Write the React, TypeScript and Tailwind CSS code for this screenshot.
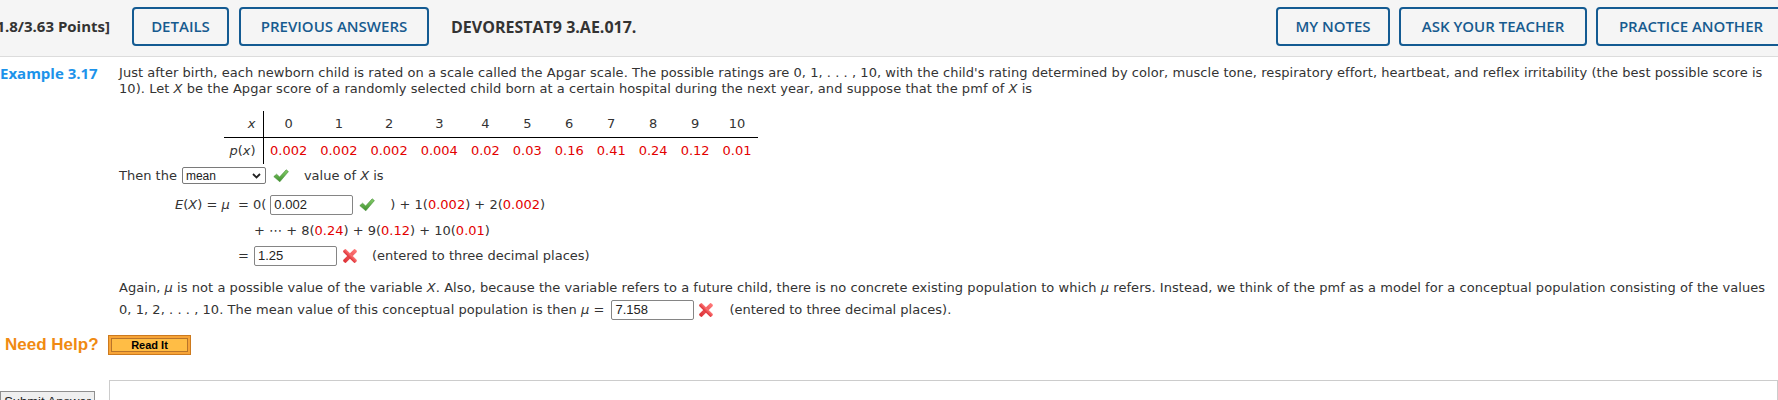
import React from "react";

function Check() {
  return (
    <svg width="16" height="14" viewBox="0 0 16 14" className="shrink-0">
      <defs>
        <linearGradient id="ck" x1="0" y1="0" x2="0" y2="1">
          <stop offset="0" stopColor="#86cf6a" />
          <stop offset="1" stopColor="#3d8f2c" />
        </linearGradient>
      </defs>
      <path d="M0.8 7.6 L3.6 5.2 L6.6 8 L13.2 0.8 L15.4 2.6 L6.8 12.8 Z" fill="url(#ck)" stroke="#3f8a30" strokeWidth="0.6" strokeLinejoin="round" />
    </svg>
  );
}

function Cross() {
  return (
    <svg width="14" height="14" viewBox="0 0 14 14" className="shrink-0">
      <defs>
        <linearGradient id="cx" x1="0" y1="0" x2="0" y2="1">
          <stop offset="0" stopColor="#ff7a7a" />
          <stop offset="1" stopColor="#dc2f35" />
        </linearGradient>
      </defs>
      <g transform="rotate(45 7 7)" fill="url(#cx)">
        <rect x="5" y="-1.5" width="4" height="17" rx="1.5" />
        <rect x="-1.5" y="5" width="17" height="4" rx="1.5" />
      </g>
    </svg>
  );
}

function Field({ value }: { value: string }) {
  return (
    <div className="w-[83px] h-[20px] border border-[#858585] rounded-[2px] bg-white pl-[3px] flex items-center font-['Liberation_Sans',Arial,sans-serif] text-[13px] text-[#222] shrink-0">
      {value}
    </div>
  );
}

function R({ children }: { children: React.ReactNode }) {
  return <span className="text-[#e30000]">{children}</span>;
}

const xs = ["0", "1", "2", "3", "4", "5", "6", "7", "8", "9", "10"];
const ps = ["0.002", "0.002", "0.002", "0.004", "0.02", "0.03", "0.16", "0.41", "0.24", "0.12", "0.01"];

export default function App() {
  const btn =
    "h-[39px] flex items-center justify-center border-2 border-[#145b92] rounded-[4px] text-[15px] font-semibold text-[#175b8f] shrink-0";
  return (
    <div className="w-[1778px] h-[400px] overflow-hidden bg-white text-[#333] font-[Verdana,'DejaVu_Sans',sans-serif] text-[13px]">
      {/* header bar */}
      <div className="h-[57px] bg-[#f5f5f5] border-b border-[#dcdcdc] flex items-start pt-[7px] font-['Open_Sans',sans-serif]">
        <div className="w-[110px] h-[39px] flex items-center justify-end overflow-hidden shrink-0">
          <span className="whitespace-nowrap font-bold text-[15px] text-[#333]">[1.8/3.63 Points]</span>
        </div>
        <div className={btn + " w-[97px] ml-[22px]"}>DETAILS</div>
        <div className={btn + " w-[190px] ml-[10px]"}>PREVIOUS ANSWERS</div>
        <div className="h-[39px] flex items-center ml-[22px] font-bold text-[16px] text-[#333] whitespace-nowrap">
          DEVORESTAT9 3.AE.017.
        </div>
        <div className="ml-auto mr-[-8px] flex gap-[9px]">
          <div className={btn + " w-[114px]"}>MY NOTES</div>
          <div className={btn + " w-[188px]"}>ASK YOUR TEACHER</div>
          <div className={btn + " w-[190px]"}>PRACTICE ANOTHER</div>
        </div>
      </div>

      {/* question */}
      <div className="flex mt-[8px]">
        <div className="w-[119px] shrink-0 font-['Open_Sans',sans-serif] font-bold text-[15px] text-[#1c93ea] leading-[16px]">
          Example 3.17
        </div>
        <div className="flex-1 leading-[16px] whitespace-nowrap">
          <div className="tracking-[0.05px]">
            Just after birth, each newborn child is rated on a scale called the Apgar scale. The possible ratings are 0, 1, . . . , 10, with the child's rating determined by color, muscle tone, respiratory effort, heartbeat, and reflex irritability (the best possible score is
          </div>
          <div className="tracking-[0.05px]">
            10). Let <i>X</i> be the Apgar score of a randomly selected child born at a certain hospital during the next year, and suppose that the pmf of <i>X</i> is
          </div>

          <table className="border-collapse ml-[105px] mt-[14px]">
            <tbody>
              <tr className="h-[26px] border-b border-black">
                <td className="w-[39px] pr-[7px] text-right border-r border-black italic">x</td>
                {xs.map((v, i) => (
                  <td key={i} className="px-[6.5px] text-center">{v}</td>
                ))}
              </tr>
              <tr className="h-[27px]">
                <td className="w-[39px] pr-[7px] text-right border-r border-black">
                  <i>p</i>(<i>x</i>)
                </td>
                {ps.map((v, i) => (
                  <td key={i} className="px-[6.5px] text-center text-[#e30000]">{v}</td>
                ))}
              </tr>
            </tbody>
          </table>

          <div className="flex items-center h-[17px] mt-[3px]">
            <span>Then the</span>
            <div className="ml-[5px] w-[84px] h-[17px] border border-[#7a7a7a] rounded-[2px] bg-white flex items-center justify-between pl-[3px] pr-[4px] font-['Liberation_Sans',Arial,sans-serif] text-[12px] text-[#222]">
              <span>mean</span>
              <svg width="9" height="6" viewBox="0 0 9 6">
                <polyline points="1,1 4.5,4.5 8,1" fill="none" stroke="#222" strokeWidth="1.8" />
              </svg>
            </div>
            <div className="ml-[7px]"><Check /></div>
            <span className="ml-[15px]">value of <i>X</i> is</span>
          </div>

          <div className="flex items-center h-[20px] mt-[11px] ml-[56px]">
            <span>
              <i>E</i>(<i>X</i>) = <i>μ</i>&nbsp; = 0(
            </span>
            <div className="ml-[4px]"><Field value="0.002" /></div>
            <div className="ml-[6px]"><Check /></div>
            <span className="ml-[15px]">
              ) + 1(<R>0.002</R>) + 2(<R>0.002</R>)
            </span>
          </div>

          <div className="mt-[8px] ml-[135px]">
            + ⋯ + 8(<R>0.24</R>) + 9(<R>0.12</R>) + 10(<R>0.01</R>)
          </div>

          <div className="flex items-center h-[20px] mt-[7px] ml-[119px]">
            <span>=</span>
            <div className="ml-[5px]"><Field value="1.25" /></div>
            <div className="ml-[6px]"><Cross /></div>
            <span className="ml-[15px]">(entered to three decimal places)</span>
          </div>

          <div className="mt-[14px] tracking-[0.05px]">
            Again, <i>μ</i> is not a possible value of the variable <i>X</i>. Also, because the variable refers to a future child, there is no concrete existing population to which <i>μ</i> refers. Instead, we think of the pmf as a model for a conceptual population consisting of the values
          </div>
          <div className="flex items-center h-[20px] mt-[4px]">
            <span className="tracking-[0.05px]">
              0, 1, 2, . . . , 10. The mean value of this conceptual population is then <i>μ</i> =
            </span>
            <div className="ml-[7px]"><Field value="7.158" /></div>
            <div className="ml-[5px]"><Cross /></div>
            <span className="ml-[16px]">(entered to three decimal places).</span>
          </div>
        </div>
      </div>

      {/* help */}
      <div className="flex items-center mt-[15px] h-[20px]">
        <div className="w-[108px] pl-[5px] font-['Liberation_Sans',Arial,sans-serif] font-bold text-[17px] text-[#f08a12] whitespace-nowrap">
          Need Help?
        </div>
        <div className="w-[83px] h-[20px] border border-[#cd7a1e] bg-[#f7a437] p-[2px]">
          <div className="h-full border border-[#b8742a] bg-[#ffbd45] flex items-center justify-center font-['Liberation_Sans',Arial,sans-serif] font-bold text-[11px] text-black">
            Read It
          </div>
        </div>
      </div>

      {/* submit */}
      <div className="flex items-start mt-[25px]">
        <div className="mt-[11px] w-[95px] h-[22px] border border-[#8f8f8f] bg-[#efefef] flex items-center justify-center font-['Liberation_Sans',Arial,sans-serif] text-[13px] text-[#222] shrink-0">
          Submit Answer
        </div>
        <div className="ml-[14px] flex-1 h-[60px] border border-[#cccccc]" />
      </div>
    </div>
  );
}
